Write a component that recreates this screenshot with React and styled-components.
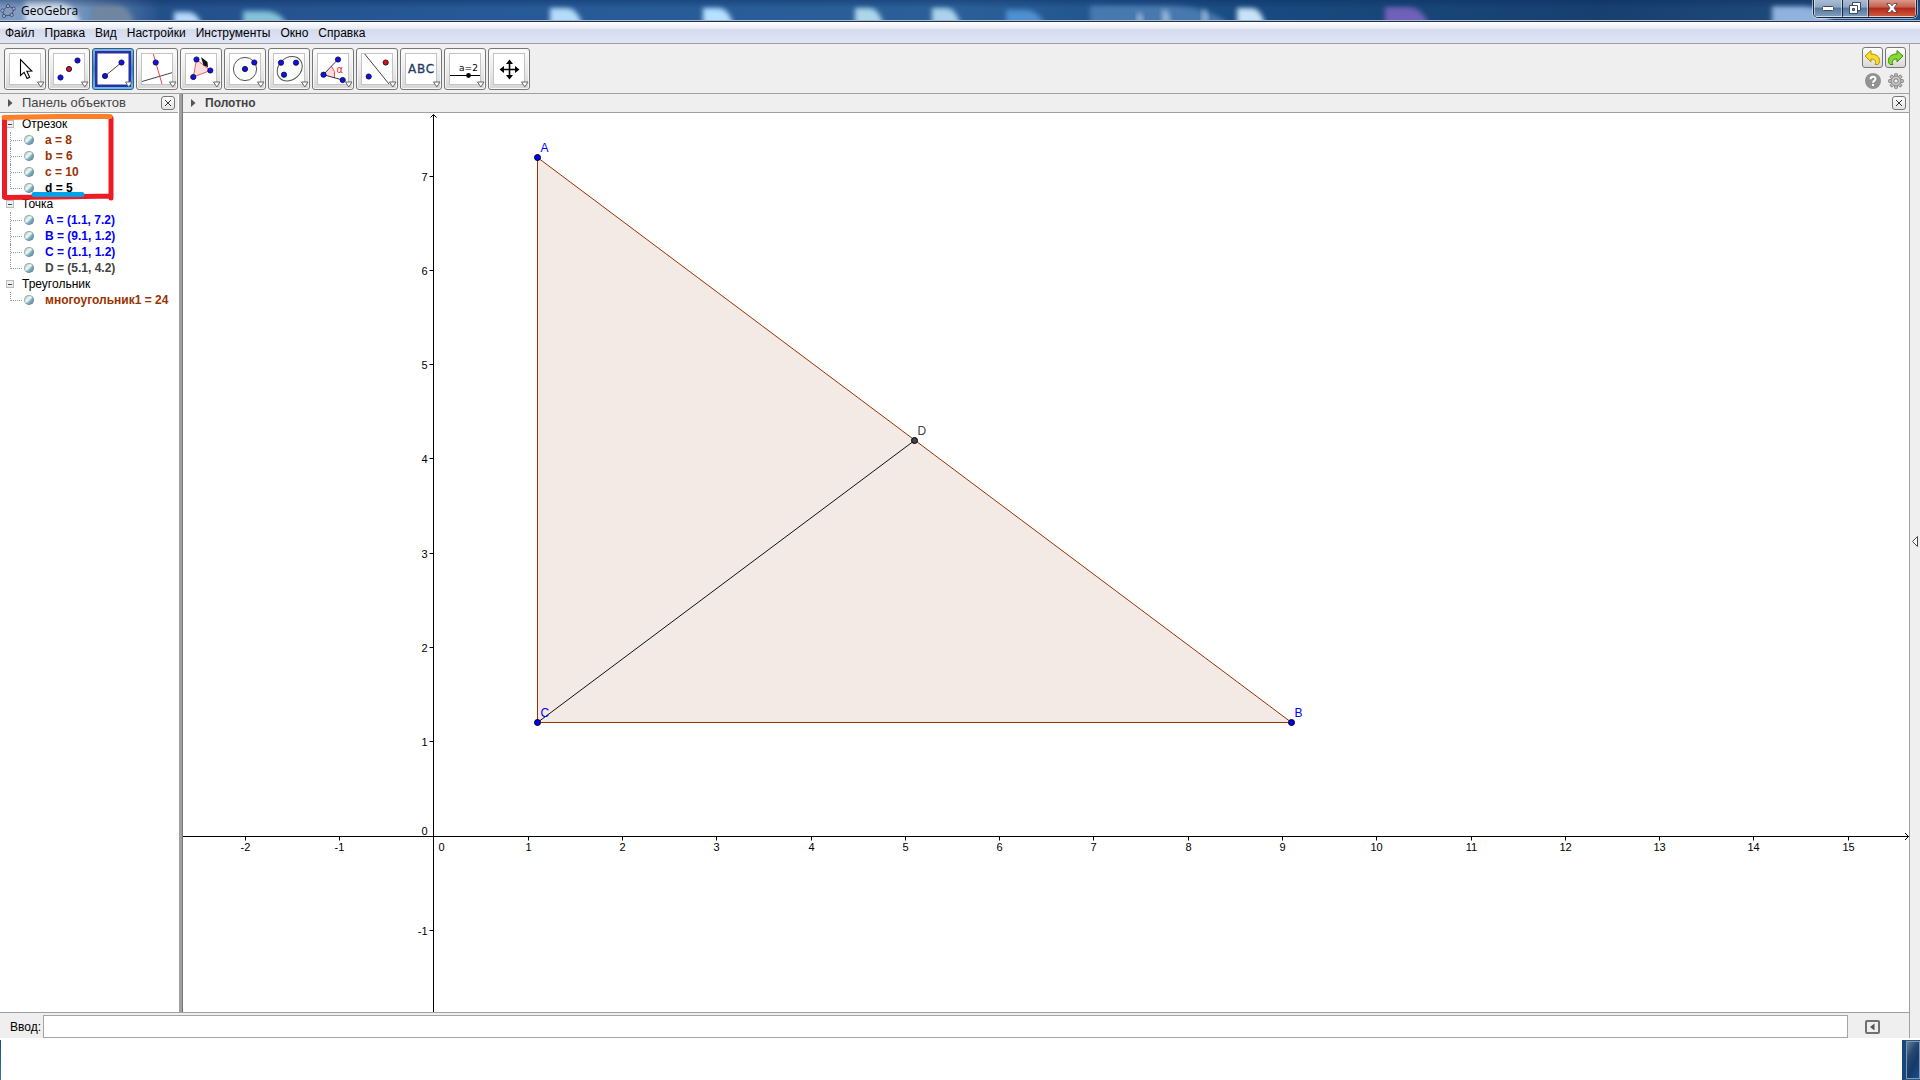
import React from "react";
import styled, { createGlobalStyle, css } from "styled-components";

const Global = createGlobalStyle`
  * { box-sizing: border-box; }
  body { margin: 0; background: #fff; }
  button, input { font: inherit; margin: 0; padding: 0; }
  svg { display: block; }
`;

const Screen = styled.div`
  display: flex;
  flex-direction: column;
  height: 100vh;
  overflow: hidden;
  font: 12px/16px "Liberation Sans", Arial, sans-serif;
  color: #000;
`;

/* ---------- title bar ---------- */

const TitleBar = styled.header`
  position: relative;
  display: flex;
  justify-content: space-between;
  height: 22px;
  flex: none;
  overflow: hidden;
  border-bottom: 1px solid #20304e;
  background: linear-gradient(90deg, #7d9cc4 0, #7d9cc4 70px, #24508a 160px, #265996 480px, #2a6098 960px, #184a80 1260px, #17406f 1600px, #234f80 100%);
`;

const Backdrop = styled.svg`
  position: absolute;
  inset: 0;
  width: 100%;
  height: 100%;
`;

const TitleShade = styled.div`
  position: absolute;
  inset: 0;
  border-bottom: 1px solid #a9bbd6;
  background: linear-gradient(rgba(10, 40, 90, 0.4), rgba(10, 40, 90, 0) 8px);
`;

const TitleText = styled.h1`
  position: relative;
  display: flex;
  align-items: center;
  gap: 5px;
  margin: 0;
  font: 12px/20px "Open Sans", "Noto Sans", sans-serif;
  height: 22px;
`;

const WindowControls = styled.div`
  position: relative;
  display: flex;
  height: 18px;
  margin-right: 3px;
  border: 1px solid #14243c;
  border-top: 0;
  border-radius: 0 0 5px 5px;
  box-shadow: 0 0 0 1px rgba(230, 240, 255, 0.6);
  overflow: hidden;
`;

const WindowButton = styled.button`
  display: grid;
  place-items: center;
  width: ${(p) => p.$width}px;
  border: 1px solid rgba(255, 255, 255, 0.5);
  border-top: 0;
  background: ${(p) =>
    p.$danger
      ? "linear-gradient(#d89a8d 0, #c5604d 45%, #b0281a 50%, #d0573a 100%)"
      : "linear-gradient(#a9bcd4 0, #8fa6c2 45%, #55759b 50%, #7d9cbc 100%)"};
  & + & { border-left-color: #14243c; }
`;

/* ---------- menu and toolbar ---------- */

const MenuBar = styled.nav`
  display: flex;
  flex: none;
  gap: 10px;
  height: 22px;
  padding: 0 5px;
  border-bottom: 1px solid #a0a0a0;
  background: linear-gradient(#fff 0, #e6eaf4 7px, #d4dbec 7px, #e0e5f6 100%);
`;

const MenuItem = styled.button`
  border: 0;
  background: none;
  line-height: 22px;
`;

const Body = styled.div`
  display: flex;
  flex: 1;
  min-height: 0;
`;

const Main = styled.main`
  display: flex;
  flex-direction: column;
  flex: 1;
  min-width: 0;
  border-right: 1px solid #a0a0a0;
`;

const SideStrip = styled.aside`
  display: flex;
  align-items: center;
  justify-content: flex-end;
  width: 10px;
  padding-right: 2px;
  background: #efefef;
`;

const PlainButton = styled.button`
  display: grid;
  place-items: center;
  border: 0;
  background: none;
`;

const ToolBar = styled.div`
  display: flex;
  flex: none;
  justify-content: space-between;
  height: 50px;
  padding: 3px 3px 0 4px;
  border-bottom: 1px solid #a0a0a0;
  background: #efefef;
`;

const ToolGroup = styled.div`
  display: flex;
  gap: 2px;
  padding-top: 1px;
`;

const ToolButton = styled.button`
  width: 42px;
  height: 42px;
  border: 1px solid #777;
  border-radius: 3px;
  background: linear-gradient(#fdfdfd, #ececec 50%, #d6d6d6);
  box-shadow: inset 0 0 0 1px #f8f8f8;
  ${(p) =>
    p.$active &&
    css`
      border-color: #2d5d86;
      background: linear-gradient(#7fb4dd, #3f86c4 50%, #69bdea);
      box-shadow: none;
    `}
  svg { margin: -1px; }
`;

const ActionGrid = styled.div`
  display: grid;
  grid-template-columns: 21px 21px;
  grid-template-rows: 21px 21px;
  gap: 2px;
`;

const SmallButton = styled.button`
  display: grid;
  place-items: center;
  border: 1px solid #777;
  border-radius: 3px;
  background: linear-gradient(#fff, #d8d8d8);
`;

/* ---------- panels ---------- */

const Panels = styled.div`
  display: flex;
  flex: 1;
  min-height: 0;
`;

const ObjectPanel = styled.section`
  display: flex;
  flex-direction: column;
  width: 183px;
  flex: none;
  padding-right: 1px;
  border-right: 4px solid #a0a0a0;
`;

const CanvasPanel = styled.section`
  display: flex;
  flex-direction: column;
  flex: 1;
  min-width: 0;
  border-left: 1px solid #777;
  margin-left: -1px;
`;

const PanelHeader = styled.div`
  display: flex;
  align-items: center;
  flex: none;
  height: 19px;
  padding: 0 3px 0 8px;
  border-bottom: 1px solid #a0a0a0;
  background: #efefef;
`;

const PanelTitle = styled.h2`
  flex: 1;
  margin: 0 0 0 9px;
  font-size: ${(p) => (p.$bold ? 12 : 13)}px;
  font-weight: ${(p) => (p.$bold ? 700 : 400)};
  line-height: 18px;
  color: #444;
`;

const CloseButton = styled.button`
  display: grid;
  place-items: center;
  width: 14px;
  height: 14px;
  border: 1px solid #777;
  border-radius: 3px;
  background: linear-gradient(#fff, #e2e2e2);
`;

const TreeArea = styled.div`
  position: relative;
  flex: 1;
  padding: 3px 0 0 6px;
`;

const List = styled.ul`
  margin: 0;
  padding: 0;
  list-style: none;
`;

const GroupRow = styled.div`
  display: flex;
  align-items: center;
  gap: 8px;
  height: 16px;
`;

const Toggle = styled.button`
  display: grid;
  place-items: center;
  width: 8px;
  height: 8px;
  border: 1px solid #bbb;
  background: #eee;
`;

const ItemRow = styled.li`
  display: flex;
  align-items: center;
  height: 16px;
  font-weight: 700;
  color: ${(p) => p.$color};
  white-space: nowrap;
`;

const Branch = styled.span`
  align-self: flex-start;
  width: 12px;
  height: ${(p) => (p.$last ? 9 : 16)}px;
  margin: 0 2px 0 4px;
  border-left: 1px dotted #999;
  background: repeating-linear-gradient(90deg, #999 0 1px, transparent 1px 2px) 0 8px / 100% 1px no-repeat;
`;

const Marble = styled.span`
  width: 10px;
  height: 10px;
  margin-right: 11px;
  border-radius: 50%;
  border: 1px solid #8fb0ac;
  border-right-color: #5f8ca4;
  border-bottom-color: #5f8ca4;
  background: linear-gradient(135deg, #a4c8b8 0, #f2faf5 45%, #8cb4bc 62%, #4c84a2 100%);
`;

const Annotation = styled.svg`
  position: absolute;
  left: 0;
  top: 0;
`;

const Plot = styled.svg`
  flex: 1;
  width: 100%;
  min-height: 0;
  background: #fff;
  text { font-family: "Liberation Sans", Arial, sans-serif; }
`;

/* ---------- input bar and task bar ---------- */

const InputBar = styled.form`
  display: flex;
  align-items: center;
  flex: none;
  height: 26px;
  padding: 2px 29px 0 10px;
  border-top: 1px solid #a0a0a0;
  background: #efefef;
`;

const InputLabel = styled.label`
  width: 33px;
`;

const CommandInput = styled.input`
  flex: 1;
  height: 23px;
  border: 1px solid #a5a5a5;
  border-radius: 0;
  background: #fff;
  outline: 0;
  margin-right: 17px;
`;

const TaskBar = styled.footer`
  display: flex;
  justify-content: space-between;
  flex: none;
  height: 42px;
  padding-top: 2px;
  background: #fff;
`;

const TaskEdge = styled.span`
  width: 1px;
  background: linear-gradient(#1d4a7a, #2d76b0);
`;

const ShowDesktop = styled.button`
  width: 18px;
  border: 1px solid #2a5580;
  border-right: 0;
  border-left: 4px solid #174679;
  background: linear-gradient(120deg, #6a88a8 0, #27486f 35%, #16396a 60%, #1b4f8c 100%);
  box-shadow: inset 0 0 0 1px #7d97b5;
`;

/* ---------- drawings ---------- */

const Dot = ({ x, y, red }) => (
  <circle cx={x} cy={y} r="2.6" fill={red ? "#e01010" : "#1010ee"} stroke="#101040" strokeWidth="0.9" />
);

const toolDrawings = {
  move: (
    <path d="M16.5 11.5v16l3.6-3.2 3 6.2 2.6-1.2-2.8-6 4.9-.2z" fill="#fff" stroke="#000" strokeWidth="1.1" />
  ),
  point: (
    <>
      <Dot x={12.5} y={29.5} />
      <Dot x={21} y={21} red />
      <Dot x={29.5} y={12.5} />
    </>
  ),
  segment: (
    <>
      <path d="M13 28L29.5 14.5" stroke="#444" />
      <Dot x={13} y={28} />
      <Dot x={29.5} y={14.5} />
    </>
  ),
  perpendicular: (
    <>
      <path d="M6 33.5L36 24.7" stroke="#444" />
      <path d="M17.3 6L26 36" stroke="#f04848" />
      <Dot x={19.7} y={14.5} />
    </>
  ),
  polygon: (
    <>
      <path d="M16.5 11.5L30.3 22.5 13.3 29z" fill="#fbdcdc" stroke="#f06060" />
      <Dot x={16.5} y={11.5} />
      <Dot x={30.3} y={22.5} />
      <Dot x={13.3} y={29} />
      <path d="M21 9l6.5 5 .5 5.500-1.500-1-3-1z" fill="#111" />
    </>
  ),
  circle: (
    <>
      <circle cx="21" cy="21" r="11.6" fill="#fafcfa" stroke="#555" />
      <Dot x={21} y={21} />
      <Dot x={30.3} y={14.5} />
    </>
  ),
  conic: (
    <>
      <ellipse cx="21.7" cy="20.8" rx="13.6" ry="11" transform="rotate(-42 21.7 20.8)" fill="#fafcfa" stroke="#555" />
      <Dot x={13} y={14.7} />
      <Dot x={28} y={14.7} />
      <Dot x={16} y={26.7} />
    </>
  ),
  angle: (
    <>
      <path d="M11.3 26.7L19.5 18.3Q23.5 23 22.5 29.7z" fill="#fbdcdc" />
      <path d="M19.5 18.3Q23.8 23 22.5 29.7" fill="none" stroke="#f04848" />
      <path d="M26 11.3L11.3 26.7 30.7 32" fill="none" stroke="#333" />
      <Dot x={11.5} y={26.7} />
      <Dot x={26} y={11.5} />
      <Dot x={30.7} y={32} />
      <text x="24.5" y="25" fontSize="10" fill="#e03030" fontFamily="DejaVu Sans, sans-serif">α</text>
    </>
  ),
  reflect: (
    <>
      <path d="M8.7 6L33 36" stroke="#444" />
      <Dot x={29.7} y={14.5} red />
      <Dot x={12.7} y={28.5} />
    </>
  ),
  text: (
    <g fontSize="12" fill="#1e3c64" stroke="#1e3c64" strokeWidth="0.3" textAnchor="middle" fontFamily="DejaVu Sans, sans-serif">
      <text x="12" y="25">A</text>
      <text x="21" y="25">B</text>
      <text x="30" y="25">C</text>
    </g>
  ),
  slider: (
    <>
      <path d="M6 27.5h30" stroke="#000" />
      <circle cx="24.5" cy="27.5" r="2.4" />
      <text x="24.5" y="23" textAnchor="middle" fontSize="9" fontFamily="DejaVu Sans, sans-serif">a=2</text>
    </>
  ),
  pan: (
    <>
      <path d="M21.5 14v15M14 21.5h15" stroke="#000" strokeWidth="1.6" />
      <path d="M21.5 11.5l3.5 4.5h-7zM21.5 31.5l3.5-4.5h-7zM11.5 21.5l4.5-3.5v7zM31.5 21.5l-4.5-3.5v7z" />
    </>
  ),
};

const tools = [
  ["move", "Перемещать"],
  ["point", "Точка"],
  ["segment", "Отрезок"],
  ["perpendicular", "Перпендикулярная прямая"],
  ["polygon", "Многоугольник"],
  ["circle", "Окружность"],
  ["conic", "Эллипс"],
  ["angle", "Угол"],
  ["reflect", "Отражение"],
  ["text", "Надпись"],
  ["slider", "Ползунок"],
  ["pan", "Переместить чертёж"],
];

const Tool = ({ name, label, active }) => (
  <ToolButton type="button" aria-label={label} aria-pressed={active} $active={active}>
    <svg width="42" height="42" viewBox="0 0 42 42">
      {active && <rect x="4.5" y="4.5" width="33" height="33" fill="none" stroke="#2a2fa6" strokeWidth="3" />}
      <rect x="5.5" y="5.5" width="31" height="31" fill="#fff" stroke={active ? "none" : "#c4c4c4"} />
      {toolDrawings[name]}
      <path d="M33.5 34h6.5l-3.25 5z" fill="#fff" stroke="#666" />
    </svg>
  </ToolButton>
);

const Cross = () => (
  <svg width="8" height="8" viewBox="0 0 8 8">
    <path d="M1 1l6 6M7 1L1 7" stroke="#333" />
  </svg>
);

const Expander = () => (
  <svg width="5" height="8" viewBox="0 0 5 8">
    <path d="M0 0l4.5 4L0 8z" fill="#555" />
  </svg>
);

const gearTeeth = [0, 45, 90, 135, 180, 225, 270, 315];

/* ---------- object list ---------- */

const BROWN = "#993300";
const BLUE = "#0000ff";
const GREY = "#444";

const groups = [
  {
    name: "Отрезок",
    items: [
      ["a = 8", BROWN],
      ["b = 6", BROWN],
      ["c = 10", BROWN],
      ["d = 5", "#000"],
    ],
  },
  {
    name: "Точка",
    items: [
      ["A = (1.1, 7.2)", BLUE],
      ["B = (9.1, 1.2)", BLUE],
      ["C = (1.1, 1.2)", BLUE],
      ["D = (5.1, 4.2)", GREY],
    ],
  },
  { name: "Треугольник", items: [["многоугольник1 = 24", BROWN]] },
];

/* ---------- coordinate plane ---------- */

const UNIT = 94.28;
const ORIGIN = { x: 250.5, y: 723.5 };
const px = (x) => Math.floor(ORIGIN.x + 0.5 + x * UNIT) + 0.5;
const py = (y) => Math.floor(ORIGIN.y - 0.5 - y * UNIT) + 0.5;

const points = [
  { name: "A", x: 1.1, y: 7.2, color: BLUE },
  { name: "B", x: 9.1, y: 1.2, color: BLUE },
  { name: "C", x: 1.1, y: 1.2, color: BLUE },
  { name: "D", x: 5.1, y: 4.2, color: GREY },
];
const xTicks = [-2, -1, 1, 2, 3, 4, 5, 6, 7, 8, 9, 10, 11, 12, 13, 14, 15];
const yTicks = [-1, 1, 2, 3, 4, 5, 6, 7];

const CoordinatePlane = () => {
  const [a, b, c, d] = points.map((p) => ({ x: px(p.x), y: py(p.y) }));
  return (
    <Plot role="img" aria-label="Полотно">
      <polygon points={`${a.x},${a.y} ${b.x},${b.y} ${c.x},${c.y}`} fill="#f3eae5" stroke={BROWN} />
      <line x1={c.x} y1={c.y} x2={d.x} y2={d.y} stroke="#111" />
      <line x1={ORIGIN.x} y1="2" x2={ORIGIN.x} y2="100%" stroke="#000" />
      <path d={`M${ORIGIN.x - 3} 4.5L${ORIGIN.x} 1.5l3 3`} fill="none" stroke="#000" />
      <line x1="0" y1={ORIGIN.y} x2="100%" y2={ORIGIN.y} stroke="#000" />
      <svg x="100%" y={ORIGIN.y} overflow="visible">
        <path d="M-4-3.5L-.5 0-4 3.5" fill="none" stroke="#000" />
      </svg>
      {xTicks.map((n) => (
        <g key={n}>
          <path d={`M${px(n)} ${ORIGIN.y}v4`} stroke="#000" />
          <text x={px(n)} y={ORIGIN.y + 14} fontSize="11" textAnchor="middle">{n}</text>
        </g>
      ))}
      {yTicks.map((n) => (
        <g key={n}>
          <path d={`M${ORIGIN.x} ${py(n)}h-4`} stroke="#000" />
          <text x={ORIGIN.x - 6} y={py(n) + 4} fontSize="11" textAnchor="end">{n}</text>
        </g>
      ))}
      <text x={ORIGIN.x + 5} y={ORIGIN.y + 14} fontSize="11">0</text>
      <text x={ORIGIN.x - 6} y={ORIGIN.y - 2} fontSize="11" textAnchor="end">0</text>
      {points.map((p) => (
        <g key={p.name}>
          <circle cx={px(p.x)} cy={py(p.y)} r="3" fill={p.color} stroke="#000" />
          <text x={px(p.x) + 3} y={py(p.y) - 6} fontSize="12" fill={p.color}>{p.name}</text>
        </g>
      ))}
    </Plot>
  );
};

const blobs = [
  [25, 0, 55, 22, "#d3dfee"],
  [92, 4, 42, 18, "#6f86a0"],
  [174, 12, 28, 14, "#b4d9fc"],
  [243, 11, 44, 14, "#83c3d8"],
  [550, 8, 32, 16, "#b5dbfa"],
  [703, 8, 30, 16, "#b5e0ff"],
  [855, 8, 28, 16, "#acd6ea"],
  [932, 8, 28, 16, "#abd2ec"],
  [1006, 10, 38, 14, "#5090d0"],
  [1090, 5, 140, 20, "#4678ae"],
  [1137, 13, 6, 5, "#96b6d6"],
  [1162, 10, 8, 9, "#96b6d6"],
  [1202, 10, 6, 9, "#96b6d6"],
  [1237, 8, 28, 16, "#c8e2f6"],
  [1385, 7, 44, 18, "#7060b8"],
  [1772, 6, 60, 18, "#8fb2de"],
];

export default function App() {
  return (
    <Screen>
      <Global />
      <TitleBar>
        <Backdrop aria-hidden="true">
          <filter id="soft" x="-30%" y="-60%" width="160%" height="220%">
            <feGaussianBlur stdDeviation="2.5" />
          </filter>
          {blobs.map(([x, y, w, h, c]) => (
            <path
              key={x}
              d={`M${x} ${y}h${w * 0.5}q${w * 0.35} 0 ${w * 0.5} ${h}v6h${-w}z`}
              fill={c}
              filter="url(#soft)"
            />
          ))}
        </Backdrop>
        <TitleShade />
        <TitleText>
          <svg width="16" height="16" viewBox="0 0 16 16">
            <path d="M2.500 7.500L8 3l6 2.500L11.700 12 4 13z" fill="none" stroke="#555" strokeWidth="1" />
            {[[2.5, 7.5], [8, 3], [13.8, 5.5], [11.7, 12], [4, 13]].map(([x, y]) => (
              <circle key={x} cx={x} cy={y} r="1.600" fill="#a9a9ff" stroke="#333" strokeWidth="0.700" />
            ))}
          </svg>
          GeoGebra
        </TitleText>
        <WindowControls>
          <WindowButton type="button" aria-label="Свернуть" $width={28}>
            <svg width="12" height="5" viewBox="0 0 12 5">
              <rect x="0.5" y="0.5" width="11" height="4" rx="1" fill="#fff" stroke="#3d4c62" />
            </svg>
          </WindowButton>
          <WindowButton type="button" aria-label="Восстановить" $width={26}>
            <svg width="12" height="12" viewBox="0 0 12 12">
              <path d="M3.500.5h8v8h-8z" fill="#fff" stroke="#3d4c62" />
              <path d="M.5 3.500h8v8h-8z" fill="#fff" stroke="#3d4c62" />
              <path d="M3.500 6.500h2v2h-2z" fill="#6c86a6" stroke="#3d4c62" />
            </svg>
          </WindowButton>
          <WindowButton type="button" aria-label="Закрыть" $width={48} $danger>
            <svg width="12" height="10" viewBox="0 0 12 10">
              <path d="M.8.5h3.400L6 2.800 7.800.5h3.400L8 5l3.200 4.500H7.800L6 7.200 4.200 9.500H.8L4 5z" fill="#fff" stroke="#4d3a44" strokeWidth="0.8" />
            </svg>
          </WindowButton>
        </WindowControls>
      </TitleBar>

      <MenuBar>
        {["Файл", "Правка", "Вид", "Настройки", "Инструменты", "Окно", "Справка"].map((m) => (
          <MenuItem key={m} type="button">{m}</MenuItem>
        ))}
      </MenuBar>

      <Body>
        <Main>
          <ToolBar>
            <ToolGroup>
              {tools.map(([name, label]) => (
                <Tool key={name} name={name} label={label} active={name === "segment"} />
              ))}
            </ToolGroup>
            <ActionGrid>
              <SmallButton type="button" aria-label="Отменить">
                <svg width="17" height="17" viewBox="0 0 17 17">
                  <path d="M1 7l6-5.500V5c5 0 8.500 2.500 8.500 6.500 0 2-.5 3-1.500 4h-3c1.500-2.500.5-5.500-4-5.500v3z" fill="#f7dc2c" stroke="#b8900c" />
                </svg>
              </SmallButton>
              <SmallButton type="button" aria-label="Повторить">
                <svg width="17" height="17" viewBox="0 0 17 17">
                  <path d="M16 7l-6-5.500V5C5 5 1.500 7.500 1.500 11.500c0 2 .5 3 1.500 4h3C4.500 13 5.500 10 10 10v3z" fill="#86dc2c" stroke="#3c8c14" />
                </svg>
              </SmallButton>
              <PlainButton type="button" aria-label="Помощь">
                <svg width="16" height="16" viewBox="0 0 16 16">
                  <circle cx="8" cy="8" r="8" fill="#929292" />
                  <path d="M5.500 6.300C5.500 3 10.500 3 10.500 6c0 1.800-2.500 1.800-2.500 3.800M8 11v2" fill="none" stroke="#fff" strokeWidth="2" />
                </svg>
              </PlainButton>
              <PlainButton type="button" aria-label="Параметры">
                <svg width="16" height="16" viewBox="-8 -8 16 16">
                  {gearTeeth.map((r) => (
                    <rect key={r} x="-1.500" y="-7.500" width="3" height="4" rx="1" fill="#b8b8b8" stroke="#777" strokeWidth="0.800" transform={`rotate(${r})`} />
                  ))}
                  <circle r="4.800" fill="#c8c8c8" stroke="#888" strokeWidth="0.800" />
                  <circle r="2.200" fill="#f4f4f4" stroke="#777" />
                </svg>
              </PlainButton>
            </ActionGrid>
          </ToolBar>

          <Panels>
            <ObjectPanel>
              <PanelHeader>
                <Expander />
                <PanelTitle>Панель объектов</PanelTitle>
                <CloseButton type="button" aria-label="Закрыть панель объектов"><Cross /></CloseButton>
              </PanelHeader>
              <TreeArea>
                <List>
                  {groups.map((g) => (
                    <li key={g.name}>
                      <GroupRow>
                        <Toggle type="button" aria-label={`Свернуть: ${g.name}`}>
                          <svg width="4" height="1"><rect width="4" height="1" fill="#444" /></svg>
                        </Toggle>
                        {g.name}
                      </GroupRow>
                      <List>
                        {g.items.map(([text, color], i) => (
                          <ItemRow key={text} $color={color}>
                            <Branch $last={i === g.items.length - 1} />
                            <Marble />
                            {text}
                          </ItemRow>
                        ))}
                      </List>
                    </li>
                  ))}
                </List>
                <Annotation width="118" height="90" aria-hidden="true" fill="none" strokeLinecap="round">
                  <path d="M4.500 5v79M111 5v80M5 84.500l52-.5 54-1" stroke="#ed1c24" strokeWidth="5" />
                  <path d="M4 4.500l54-1h52" stroke="#ff7f27" strokeWidth="5" />
                  <path d="M34 81.500h48" stroke="#00a2e8" strokeWidth="5" />
                </Annotation>
              </TreeArea>
            </ObjectPanel>
            <CanvasPanel>
              <PanelHeader>
                <Expander />
                <PanelTitle $bold>Полотно</PanelTitle>
                <CloseButton type="button" aria-label="Закрыть полотно"><Cross /></CloseButton>
              </PanelHeader>
              <CoordinatePlane />
            </CanvasPanel>
          </Panels>

          <InputBar onSubmit={(e) => e.preventDefault()}>
            <InputLabel htmlFor="command">Ввод:</InputLabel>
            <CommandInput id="command" type="text" autoComplete="off" />
            <PlainButton type="button" aria-label="Список команд">
              <svg width="15" height="14" viewBox="0 0 15 14">
                <rect x="1" y="1" width="13" height="12" rx="1" fill="#efefef" stroke="#707070" strokeWidth="2" />
                <path d="M9.500 3.500v7L5 7z" fill="#555" />
              </svg>
            </PlainButton>
          </InputBar>
        </Main>
        <SideStrip>
          <PlainButton type="button" aria-label="Показать боковую панель">
            <svg width="6" height="11" viewBox="0 0 6 11">
              <path d="M5.500.5v10l-5-5z" fill="#fff" stroke="#444" />
            </svg>
          </PlainButton>
        </SideStrip>
      </Body>

      <TaskBar>
        <TaskEdge />
        <ShowDesktop type="button" aria-label="Свернуть все окна" />
      </TaskBar>
    </Screen>
  );
}
